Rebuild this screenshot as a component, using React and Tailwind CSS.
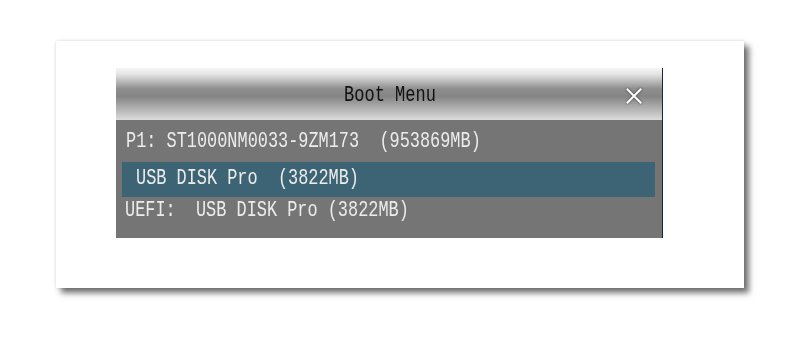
export default function App() {
  const mono = { fontFamily: '"Liberation Mono", monospace' };
  return (
    <div className="w-[800px] h-[339px] bg-white pt-[41px] pl-[56px]">
      <div className="w-[688px] h-[247px] bg-white pt-[27px] pl-[60px] shadow-[0_0_3px_rgba(0,0,0,0.15),5px_5px_6px_rgba(0,0,0,0.55)]">
        <div className="w-[547px] border-r border-[#1c2636]" style={mono}>
          <div className="relative h-[52px] flex items-center justify-center bg-[linear-gradient(to_bottom,#f6f6f6_0%,#e4e4e4_12%,#8e8e8e_40%,#858585_55%,#b9b9b9_82%,#dcdcdc_100%)]">
            <span className="text-[17px] leading-none text-[#111] scale-y-[1.35] pl-[2px]">Boot Menu</span>
            <svg className="absolute right-[20px] top-[20px]" width="16" height="16" viewBox="0 0 16 16" style={{ filter: "drop-shadow(0 0 1px rgba(0,0,0,0.6))" }}>
              <path d="M1.5 1.5 L14.5 14.5 M14.5 1.5 L1.5 14.5" stroke="#ffffff" strokeWidth="2" strokeLinecap="square" />
            </svg>
          </div>
          <div className="h-[118px] bg-[#757575] text-[#ececec] text-[16.9px] leading-none">
            <div className="h-[42px] flex items-center pl-[10px] pt-[3px]">
              <span className="scale-y-[1.35] whitespace-pre">P1: ST1000NM0033-9ZM173  (953869MB)</span>
            </div>
            <div className="ml-[6px] w-[533px] h-[35px] bg-[#3d6474] flex items-center pl-[14px]">
              <span className="scale-y-[1.35] whitespace-pre">USB DISK Pro  (3822MB)</span>
            </div>
            <div className="h-[27px] flex items-center pl-[9px] pt-[2px]">
              <span className="scale-y-[1.35] whitespace-pre">UEFI:  USB DISK Pro (3822MB)</span>
            </div>
          </div>
        </div>
      </div>
    </div>
  );
}
